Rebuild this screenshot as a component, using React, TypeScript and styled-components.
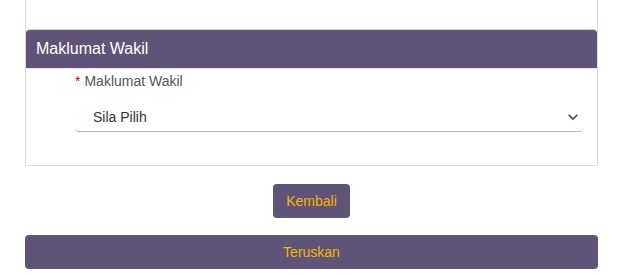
import React from 'react';
import styled, { createGlobalStyle } from 'styled-components';

const GlobalStyle = createGlobalStyle`
  body {
    margin: 0;
    background: #fff;
    font-family: Arial, "Liberation Sans", Helvetica, sans-serif;
  }
`;

const Page = styled.div`
  padding: 0 29px 0 25px;
`;

const Card = styled.div`
  border: 1px solid #dcdcdc;
  border-top: none;
  padding-top: 29px;
`;

const PanelHeader = styled.div`
  height: 39px;
  box-sizing: border-box;
  display: flex;
  align-items: center;
  padding-left: 10px;
  background: #5f5378;
  border-top: 1px solid #d6d3dc;
  border-radius: 4px 4px 0 0;
  color: #fff;
  font-size: 16px;
`;

const PanelBody = styled.div`
  border-top: 1px solid #e4e4e4;
  padding: 2px 14px 33px 49px;
`;

const Label = styled.label`
  display: block;
  font-size: 14px;
  line-height: 20px;
  color: #555;
  margin-bottom: 11px;
`;

const Required = styled.span`
  color: #e00;
  margin-right: 4px;
`;

const SelectWrap = styled.div`
  position: relative;
`;

const Select = styled.select`
  appearance: none;
  -webkit-appearance: none;
  width: 100%;
  height: 30px;
  box-sizing: border-box;
  border: none;
  border-bottom: 1px solid #bfb2c8;
  border-radius: 0 0 4px 4px;
  background: #fff;
  padding: 0 0 0 18px;
  font-family: Arial, "Liberation Sans", Helvetica, sans-serif;
  font-size: 14px;
  color: #333;
  outline: none;
`;

const Chevron = styled.svg`
  position: absolute;
  right: 5px;
  top: 12px;
  pointer-events: none;
`;

const Actions = styled.div`
  display: flex;
  flex-direction: column;
  align-items: center;
  gap: 17px;
  padding-top: 18px;
`;

const Button = styled.button<{ $block?: boolean }>`
  height: 34px;
  width: ${(p) => (p.$block ? '100%' : '77px')};
  border: none;
  border-radius: 4px;
  background: #5f5378;
  color: #f7b500;
  font-family: Arial, "Liberation Sans", Helvetica, sans-serif;
  font-size: 14px;
  cursor: pointer;
`;

export default function App() {
  return (
    <>
      <GlobalStyle />
      <Page>
        <Card>
          <PanelHeader>Maklumat Wakil</PanelHeader>
          <PanelBody>
            <Label>
              <Required>*</Required>Maklumat Wakil
            </Label>
            <SelectWrap>
              <Select defaultValue="">
                <option value="">Sila Pilih</option>
              </Select>
              <Chevron width="10" height="7" viewBox="0 0 10 7">
                <path d="M1.2 1.4 L5 5.2 L8.8 1.4" fill="none" stroke="#555" strokeWidth="1.8" strokeLinecap="round" strokeLinejoin="round" />
              </Chevron>
            </SelectWrap>
          </PanelBody>
        </Card>
        <Actions>
          <Button>Kembali</Button>
          <Button $block>Teruskan</Button>
        </Actions>
      </Page>
    </>
  );
}
